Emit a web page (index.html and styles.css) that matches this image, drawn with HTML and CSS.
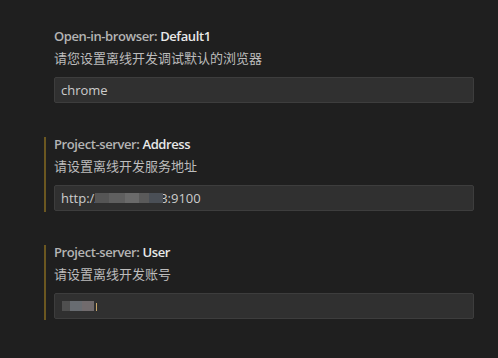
FILE: index.html
```html
<!DOCTYPE html>
<html>
<head>
<meta charset="utf-8">
<link rel="stylesheet" href="styles.css">
</head>
<body>
<div class="settings">
  <div class="item">
    <div class="bar"></div>
    <div class="content">
      <div class="title"><span class="cat">Open-in-browser: </span><span class="label">Default1</span></div>
      <div class="desc">请您设置离线开发调试默认的浏览器</div>
      <div class="input">chrome</div>
    </div>
  </div>
  <div class="item">
    <div class="bar modified"></div>
    <div class="content">
      <div class="title"><span class="cat">Project-server: </span><span class="label">Address</span></div>
      <div class="desc">请设置离线开发服务地址</div>
      <div class="input">http://<span class="mosaic addr"><i class="m1"></i><i class="m2"></i><i class="m3"></i><i class="m4"></i><i class="m5"></i></span>3:9100</div>
    </div>
  </div>
  <div class="item">
    <div class="bar modified"></div>
    <div class="content">
      <div class="title"><span class="cat">Project-server: </span><span class="label">User</span></div>
      <div class="desc">请设置离线开发账号</div>
      <div class="input"><span class="mosaic user"><i class="u1"></i><i class="u2"></i><i class="u3"></i></span><span class="caret"></span></div>
    </div>
  </div>
</div>
</body>
</html>
```
FILE: styles.css
```css
html, body {
  margin: 0;
  padding: 0;
  background: #1f1f1f;
  width: 498px;
  height: 358px;
  overflow: hidden;
  font-family: "Open Sans", "Noto Sans CJK SC", sans-serif;
  font-size: 13px;
}
.settings {
  padding-top: 25px;
  display: flex;
  flex-direction: column;
}
.item {
  display: flex;
  margin-bottom: 30px;
}
.bar {
  width: 2px;
  margin-left: 44px;
  margin-top: 4px;
  margin-bottom: -1px;
  background: transparent;
}
.bar.modified {
  background: #6b5720;
}
.content {
  flex: 1;
  padding-left: 8px;
  margin-right: 24px;
}
.title {
  margin-top: 2px;
  line-height: 18px;
  font-weight: 600;
  letter-spacing: -0.4px;
  white-space: nowrap;
}
.cat {
  color: #b4b4b4;
}
.label {
  color: #e8e8e8;
}
.desc {
  margin-top: 4px;
  line-height: 18px;
  color: #bcbcbc;
}
.input {
  margin-top: 10px;
  height: 26px;
  box-sizing: border-box;
  background: #303030;
  border: 1px solid #3d3d3d;
  border-radius: 2px;
  padding-left: 6px;
  color: #cccccc;
  line-height: 24px;
  display: flex;
  align-items: center;
  white-space: nowrap;
}
.mosaic {
  display: inline-flex;
  height: 10px;
  position: relative;
  z-index: 1;
}
.mosaic i {
  display: block;
  height: 10px;
}
.addr {
  margin-left: -4px;
  margin-right: -3px;
}
.m1 { width: 14px; background: #555555; }
.m2 { width: 16px; background: #5f5f5f; }
.m3 { width: 14px; background: #6a6a6a; }
.m4 { width: 10px; background: #5a5a5a; }
.m5 { width: 14px; background: #4a4f56; }
.user {
  margin-left: 1px;
}
.u1 { width: 8px; background: #4f4f4f; }
.u2 { width: 12px; background: #686c71; }
.u3 { width: 12px; background: #716b6d; }
.caret {
  display: block;
  width: 1px;
  height: 8px;
  margin-left: 2px;
  margin-top: 2px;
  background: #c9a66a;
}
```
